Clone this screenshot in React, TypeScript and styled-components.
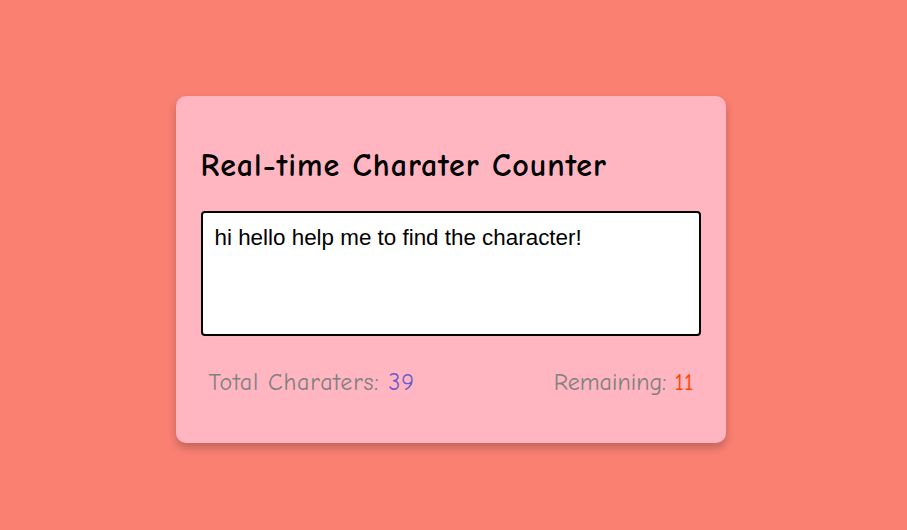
import React, { useEffect, useRef, useState } from "react";
import styled, { createGlobalStyle } from "styled-components";

const GlobalStyle = createGlobalStyle`
  html, body { margin: 0; padding: 0; }
  body {
    background: #fa8072;
    font-family: "Comic Sans MS", "Comic Neue", "DejaVu Sans", sans-serif;
  }
`;

const Page = styled.div`
  min-height: 100vh;
  box-sizing: border-box;
  padding: 9px 6px 0 0;
  display: flex;
  align-items: center;
  justify-content: center;
`;

const Card = styled.div`
  width: 500px;
  padding: 25px;
  background: #ffb6c1;
  border-radius: 10px;
  box-shadow: 0 5px 10px rgba(0, 0, 0, 0.22);
`;

const Title = styled.h2`
  margin: 26px 0 26px;
  font-size: 32px;
  line-height: 38px;
  letter-spacing: 1px;
  font-weight: bold;
  color: #000;
`;

const TextArea = styled.textarea`
  display: block;
  width: 100%;
  height: 125px;
  box-sizing: border-box;
  padding: 12px;
  border: 2px solid #000;
  border-radius: 4px;
  outline: none;
  resize: none;
  font-family: Arial, "Liberation Sans", sans-serif;
  font-size: 22.4px;
  color: #000;
  background: #fff;
  caret-color: #000;
`;

const Footer = styled.div`
  display: flex;
  justify-content: space-between;
  align-items: center;
  margin: 32px 0 22px;
  padding: 0 7px 0 8px;
  font-size: 24px;
  line-height: 28px;
  color: #808080;
`;

const Label = styled.span<{ $spacing: number }>`
  letter-spacing: ${(p) => p.$spacing}px;
`;

const Count = styled.span<{ $color: string }>`
  color: ${(p) => p.$color};
`;

const LIMIT = 50;

export default function App() {
  const [text, setText] = useState("hi hello help me to find the character!");
  const ref = useRef<HTMLTextAreaElement>(null);

  useEffect(() => {
    const el = ref.current;
    if (el) {
      el.focus();
      el.setSelectionRange(el.value.length, el.value.length);
    }
  }, []);

  return (
    <>
      <GlobalStyle />
      <Page>
        <Card>
          <Title>Real-time Charater Counter</Title>
          <TextArea
            ref={ref}
            value={text}
            maxLength={LIMIT}
            onChange={(e) => setText(e.target.value)}
          />
          <Footer>
            <Label $spacing={0.8}>
              Total Charaters: <Count $color="#6a5acd">{text.length}</Count>
            </Label>
            <Label $spacing={0}>
              Remaining: <Count $color="#ff4500">{LIMIT - text.length}</Count>
            </Label>
          </Footer>
        </Card>
      </Page>
    </>
  );
}
